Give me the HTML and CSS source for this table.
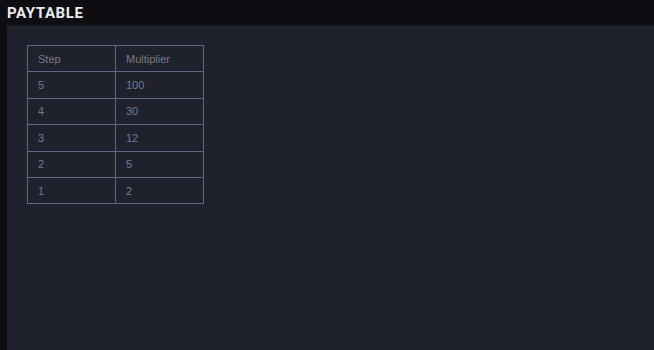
FILE: index.html
```html
<!DOCTYPE html>
<html lang="en">
<head>
    <meta charset="UTF-8">
    <meta name="viewport" content="width=device-width, initial-scale=1.0">
    <title>Paytable</title>
    <link rel="stylesheet" href="styles.css">
</head>
<body>
    <header>
        <h1>PAYTABLE</h1>
    </header>

    <div class="panel">
        <table class="paytable">
            <tr>
                <td>Step</td>
                <td>Multiplier</td>
            </tr>
            <tr><td>5</td><td>100</td></tr>
            <tr><td>4</td><td>30</td></tr>
            <tr><td>3</td><td>12</td></tr>
            <tr><td>2</td><td>5</td></tr>
            <tr><td>1</td><td>2</td></tr>
        </table>
    </div>
</body>
</html>
```

FILE: styles.css
```css
html, body {
    height: 100%;
}

body {
    margin: 0;
    display: flex;
    flex-direction: column;
    font-family: "Liberation Sans", Arial, sans-serif;
    background-color: #0d0e12;
    color: #fff;
}

header {
    height: 25px;
    padding: 0 7px;
    display: flex;
    align-items: center;
}

header h1 {
    margin: 0;
    font-family: Roboto, "Liberation Sans", sans-serif;
    font-size: 15px;
    font-weight: bold;
    color: #ececee;
    letter-spacing: 0.6px;
}

.panel {
    flex: 1;
    margin-left: 7px;
    padding: 20px;
    background-color: #1f222c;
    border-top: 1px solid #191b22;
}

/* Paytable grid */
.paytable {
    border-collapse: collapse;
    margin-top: -1px;
}

.paytable td {
    width: 77px;
    height: 25.4px;
    padding: 0 0 0 10px;
    border: 1px solid #5d6682;
    font-size: 11px;
    color: #767b89;
    vertical-align: middle;
}
```
